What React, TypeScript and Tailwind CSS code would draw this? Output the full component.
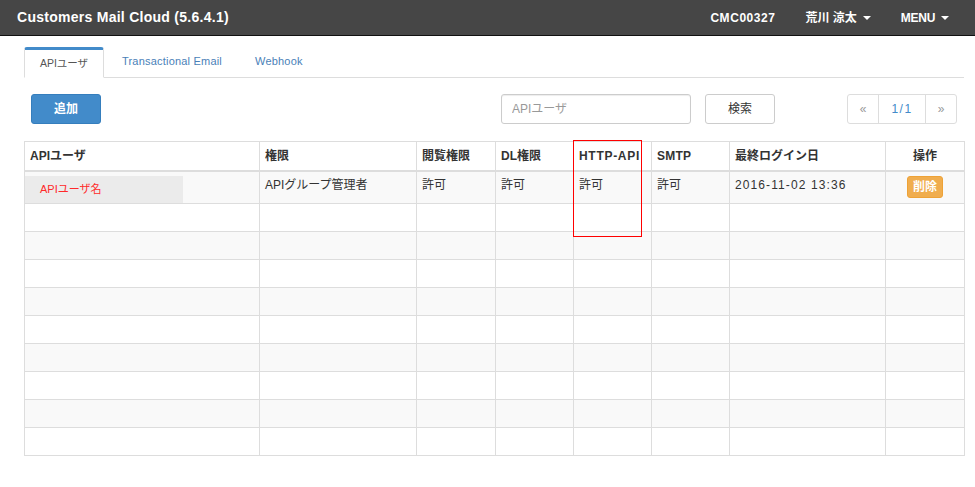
const font = "[font-family:'Liberation_Sans','Noto_Sans_CJK_JP',sans-serif]";

const columns = [
  { label: "APIユーザ", width: "w-[235px]", extra: "text-left" },
  { label: "権限", width: "w-[157px]", extra: "text-left" },
  { label: "閲覧権限", width: "w-[79px]", extra: "text-left" },
  { label: "DL権限", width: "w-[78px]", extra: "text-left" },
  { label: "HTTP-API", width: "w-[78px]", extra: "text-left tracking-[0.7px]" },
  { label: "SMTP", width: "w-[78px]", extra: "text-left tracking-[0.2px]" },
  { label: "最終ログイン日", width: "w-[156px]", extra: "text-left" },
  { label: "操作", width: "w-[79px]", extra: "text-center" },
];

const cell = "border border-[#dddddd] px-[5px] align-top text-[12px] leading-[17px] text-[#333333]";

function Caret() {
  return <span className="ml-[6px] inline-block align-middle border-x-[4px] border-t-[4px] border-x-transparent border-t-white" />;
}

export default function App() {
  return (
    <div className={`relative min-h-[487px] bg-white ${font}`}>
      <header className="flex h-[36px] items-center justify-between border-b border-[#111111] bg-[#464646] pl-[17px] pr-[26px] text-white">
        <div className="text-[14px] font-bold tracking-[0.27px]">Customers Mail Cloud (5.6.4.1)</div>
        <div className="flex items-center text-[12px] font-bold">
          <span className="mr-[30px] tracking-[0.55px]">CMC00327</span>
          <span className="mr-[30px]">荒川 涼太<Caret /></span>
          <span className="tracking-[-0.3px]">MENU<Caret /></span>
        </div>
      </header>

      <main className="pl-[24px] pr-[11px] pt-[11px]">
        <nav className="flex h-[31px] items-stretch border-b border-[#dddddd] text-[11px]">
          <div className="-mb-px flex w-[80px] items-center justify-center rounded-t-[3px] border-x border-b border-x-[#dddddd] border-b-white border-t-[3px] border-t-[#428bca] bg-white text-[10.5px] text-[#555555]">
            APIユーザ
          </div>
          <div className="ml-[18px] flex items-center pb-[2px] tracking-[0.2px] text-[#4a7fb8]">Transactional Email</div>
          <div className="ml-[33px] flex items-center pb-[2px] tracking-[0.2px] text-[#4a7fb8]">Webhook</div>
        </nav>

        <div className="mt-[16px] flex h-[30px] items-stretch pr-[7px] text-[12px]">
          <button className="ml-[7px] w-[70px] rounded-[3px] border border-[#357ebd] bg-[#428bca] font-bold text-white">
            追加
          </button>
          <input
            readOnly
            placeholder="APIユーザ"
            className="ml-[400px] w-[190px] rounded-[3px] border border-[#cccccc] px-[10px] text-[12px] shadow-[inset_0_1px_1px_rgba(0,0,0,0.075)] placeholder:text-[#999999]"
          />
          <button className="ml-[14px] w-[70px] rounded-[3px] border border-[#cccccc] bg-white text-[#333333]">
            検索
          </button>
          <div className="ml-auto flex rounded-[3px] border border-[#dddddd] text-[12px]">
            <span className="flex w-[30px] items-center justify-center text-[#999999]">«</span>
            <span className="flex w-[48px] items-center justify-center border-x border-[#dddddd] tracking-[1.5px] text-[#428bca]">1/1</span>
            <span className="flex w-[30px] items-center justify-center text-[#999999]">»</span>
          </div>
        </div>

        <table className="mt-[17px] w-[941px] table-fixed border-collapse">
          <thead>
            <tr className="h-[29px]">
              {columns.map((c) => (
                <th
                  key={c.label}
                  className={`${c.width} border border-b-2 border-[#dddddd] px-[5px] align-middle text-[12px] font-bold text-[#333333] ${c.extra}`}
                >
                  {c.label}
                </th>
              ))}
            </tr>
          </thead>
          <tbody>
            <tr className="h-[32px] bg-[#f9f9f9]">
              <td className={`${cell} !p-0`}>
                <div className="mt-[4px] flex h-[27px] w-[158px] items-center bg-[#ebebeb] pl-[15px] text-[11px] text-[#ff2a2a]">APIユーザ名</div>
              </td>
              <td className={`${cell} pt-[5px]`}>APIグループ管理者</td>
              <td className={`${cell} pt-[5px]`}>許可</td>
              <td className={`${cell} pt-[5px]`}>許可</td>
              <td className={`${cell} pt-[5px]`}>許可</td>
              <td className={`${cell} pt-[5px]`}>許可</td>
              <td className={`${cell} pt-[5px] tracking-[1.1px]`}>2016-11-02 13:36</td>
              <td className={`${cell} pt-[4px] text-center`}>
                <span className="inline-block h-[22px] w-[36px] rounded-[3px] border border-[#eea236] bg-[#f0ad4e] text-[12px] font-bold leading-[20px] text-white">削除</span>
              </td>
            </tr>
            {[0, 1, 2, 3, 4, 5, 6, 7, 8].map((row) => (
              <tr key={row} className={`h-[28px] ${row % 2 === 1 ? "bg-[#f9f9f9]" : "bg-white"}`}>
                {columns.map((c) => (
                  <td key={c.label} className="border border-[#dddddd]" />
                ))}
              </tr>
            ))}
          </tbody>
        </table>
      </main>

      {/* 注釈の赤枠 */}
      <div className="absolute left-[573px] top-[140px] h-[97px] w-[69px] border border-[#ff0000]" />
    </div>
  );
}
